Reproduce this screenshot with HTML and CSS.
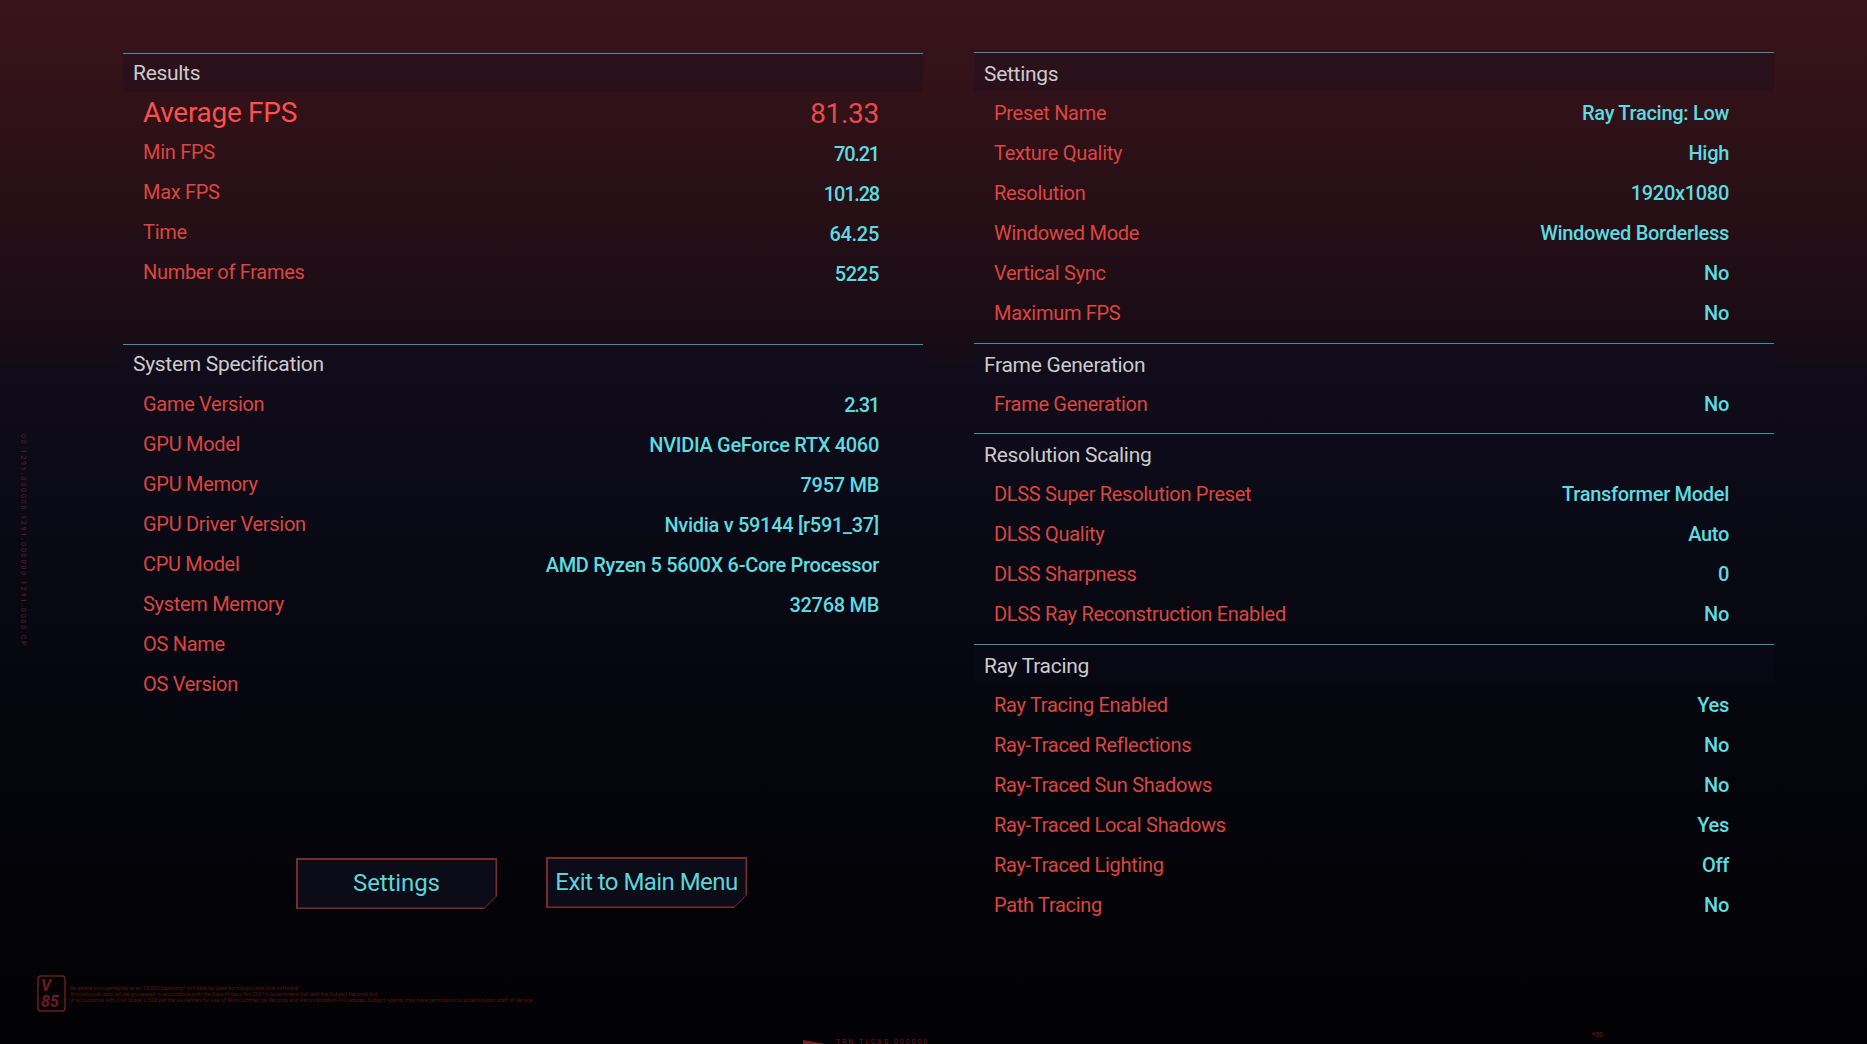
FILE: index.html
```html
<!DOCTYPE html>
<html lang="en">

<head>
    <meta charset="UTF-8">
    <title>Benchmark Results</title>
    <link rel="stylesheet" href="styles.css">
</head>

<body>
    <div class="side-text">00 1291.000000 1291.000000 1291.0000 CP</div>

    <div class="columns">
        <div class="column column-left">
            <div class="section section-results">
                <div class="section-title">Results</div>
                <div class="row row-main"><span class="label">Average FPS</span><span class="value">81.33</span></div>
                <div class="row"><span class="label">Min FPS</span><span class="value tight">70.21</span></div>
                <div class="row"><span class="label">Max FPS</span><span class="value tight">101.28</span></div>
                <div class="row"><span class="label">Time</span><span class="value">64.25</span></div>
                <div class="row"><span class="label">Number of Frames</span><span class="value">5225</span></div>
            </div>

            <div class="section section-system">
                <div class="section-title">System Specification</div>
                <div class="row"><span class="label">Game Version</span><span class="value tight">2.31</span></div>
                <div class="row"><span class="label">GPU Model</span><span class="value">NVIDIA GeForce RTX 4060</span></div>
                <div class="row"><span class="label">GPU Memory</span><span class="value">7957 MB</span></div>
                <div class="row"><span class="label">GPU Driver Version</span><span class="value">Nvidia v 59144 [r591_37]</span></div>
                <div class="row"><span class="label">CPU Model</span><span class="value">AMD Ryzen 5 5600X 6-Core Processor</span></div>
                <div class="row"><span class="label">System Memory</span><span class="value">32768 MB</span></div>
                <div class="row"><span class="label">OS Name</span></div>
                <div class="row"><span class="label">OS Version</span></div>
            </div>

            <div class="buttons">
                <div class="btn">Settings</div>
                <div class="btn btn-exit">Exit to Main Menu</div>
            </div>
        </div>

        <div class="column column-right">
            <div class="section section-wide">
                <div class="section-title">Settings</div>
                <div class="row"><span class="label">Preset Name</span><span class="value">Ray Tracing: Low</span></div>
                <div class="row"><span class="label">Texture Quality</span><span class="value">High</span></div>
                <div class="row"><span class="label">Resolution</span><span class="value">1920x1080</span></div>
                <div class="row"><span class="label">Windowed Mode</span><span class="value">Windowed Borderless</span></div>
                <div class="row"><span class="label">Vertical Sync</span><span class="value">No</span></div>
                <div class="row"><span class="label">Maximum FPS</span><span class="value">No</span></div>
            </div>

            <div class="section">
                <div class="section-title">Frame Generation</div>
                <div class="row"><span class="label">Frame Generation</span><span class="value">No</span></div>
            </div>

            <div class="section section-wide">
                <div class="section-title">Resolution Scaling</div>
                <div class="row"><span class="label">DLSS Super Resolution Preset</span><span class="value">Transformer Model</span></div>
                <div class="row"><span class="label">DLSS Quality</span><span class="value">Auto</span></div>
                <div class="row"><span class="label">DLSS Sharpness</span><span class="value">0</span></div>
                <div class="row"><span class="label">DLSS Ray Reconstruction Enabled</span><span class="value">No</span></div>
            </div>

            <div class="section">
                <div class="section-title">Ray Tracing</div>
                <div class="row"><span class="label">Ray Tracing Enabled</span><span class="value">Yes</span></div>
                <div class="row"><span class="label">Ray-Traced Reflections</span><span class="value">No</span></div>
                <div class="row"><span class="label">Ray-Traced Sun Shadows</span><span class="value">No</span></div>
                <div class="row"><span class="label">Ray-Traced Local Shadows</span><span class="value">Yes</span></div>
                <div class="row"><span class="label">Ray-Traced Lighting</span><span class="value">Off</span></div>
                <div class="row"><span class="label">Path Tracing</span><span class="value">No</span></div>
            </div>
        </div>
    </div>

    <div class="legal">
        <svg class="legal-logo" width="29" height="37" viewBox="0 0 29 37">
            <rect x="1" y="1" width="27" height="35" rx="3" fill="none" stroke="#6b1c22" stroke-width="1.5" />
            <text x="4" y="16" class="logo-text">V</text>
            <text x="4" y="32" class="logo-text">85</text>
        </svg>
        <div class="legal-text">
            <div>Be aware your gameplay at an 18.000 Samsung? will data be used for the process now software.</div>
            <div>Any personal data will be processed in accordance with the Data Privacy Act 2001's Government Act, and the Subject Records Act.</div>
            <div>In accordance with Civil Share 2: 500 per the Guidelines for use of Non-Commercial Records and Personalization Procedures, Subject Agents may have permission to access public staff of service</div>
        </div>
    </div>

    <div class="tick tick-mid">TRN TLCAS.000000</div>
    <div class="tick tick-right">*00</div>
</body>

</html>
```

FILE: styles.css
```css
html, body {
    height: 100%;
}

body {
    margin: 0;
    overflow: hidden;
    position: relative;
    box-sizing: border-box;
    padding: 52px 93px 0 123px;
    font-family: Roboto, "Liberation Sans", sans-serif;
    background: linear-gradient(180deg, #3a141a 0%, #270f16 20%, #190c15 32%, #120c1a 35%, #0a0a16 48%, #05060f 67%, #030307 85%, #020204 100%);
}

.columns {
    display: grid;
    grid-template-columns: 800px 800px;
    column-gap: 51px;
}

.column-left {
    padding-top: 1px;
}

.section {
    border-top: 1px solid #3f9499;
    padding-bottom: 11px;
}

.section-wide {
    padding-bottom: 12px;
}

.section-results {
    height: 279px;
}

.section-title {
    height: 38px;
    line-height: 38px;
    padding-left: 10px;
    font-size: 21px;
    letter-spacing: -0.3px;
    color: #cbcbcb;
    background: rgba(14, 12, 30, 0.25);
}

.column-right .section-title {
    line-height: 43px;
}

.row {
    display: flex;
    justify-content: space-between;
    align-items: center;
    height: 40px;
    padding: 0 45px 0 20px;
    font-size: 20px;
    letter-spacing: -0.3px;
}

.column-left .row {
    padding-right: 44px;
}

.label {
    color: #dc4540;
}

.column-right .label {
    margin-top: 3px;
}

.section-system .label {
    margin-top: 2px;
}

.value {
    color: #5cdbe0;
    font-weight: 500;
    margin-top: 3px;
}

.tight {
    letter-spacing: -1.2px;
}

.row-main .label {
    font-size: 28px;
    color: #ff4f4b;
}

.row-main .value {
    font-size: 28px;
    font-weight: 400;
    color: #ea4a4c;
}

.buttons {
    display: flex;
    gap: 49px;
    margin-top: 144px;
    padding-left: 173px;
}

.btn {
    position: relative;
    width: 201px;
    height: 51px;
    line-height: 50px;
    text-align: center;
    font-size: 24px;
    letter-spacing: -0.1px;
    color: #5cd4d9;
    background: #7a2a32;
    clip-path: polygon(0 0, 100% 0, 100% 38px, 188px 100%, 0 100%);
    z-index: 0;
}

.btn::before {
    content: "";
    position: absolute;
    inset: 1.5px;
    background: #0c0c18;
    clip-path: polygon(0 0, 100% 0, 100% 37px, 187px 100%, 0 100%);
    z-index: -1;
}

.btn-exit {
    margin-top: -1px;
    letter-spacing: -0.55px;
}

.side-text {
    position: absolute;
    left: 19px;
    top: 434px;
    height: 216px;
    writing-mode: vertical-rl;
    white-space: nowrap;
    font-size: 7px;
    letter-spacing: 1.9px;
    color: #6a1c28;
}

.legal {
    position: absolute;
    left: 37px;
    top: 975px;
    display: flex;
    gap: 4px;
    align-items: center;
}

.logo-text {
    font-family: Roboto, sans-serif;
    font-size: 16px;
    font-weight: 700;
    font-style: italic;
    fill: #6b1c22;
}

.legal-text {
    font-size: 5.36px;
    line-height: 6px;
    color: #5a1216;
    white-space: nowrap;
}

.tick {
    position: absolute;
    font-size: 7px;
    color: #6a1a1e;
}

.tick-mid {
    left: 836px;
    top: 1038px;
    letter-spacing: 2px;
}

.tick-mid::before {
    content: "";
    position: absolute;
    left: -33px;
    top: 2px;
    width: 28px;
    height: 5px;
    background: #7a2024;
    clip-path: polygon(0 0, 100% 100%, 0 100%);
}

.tick-right {
    left: 1592px;
    top: 1031px;
}
```
